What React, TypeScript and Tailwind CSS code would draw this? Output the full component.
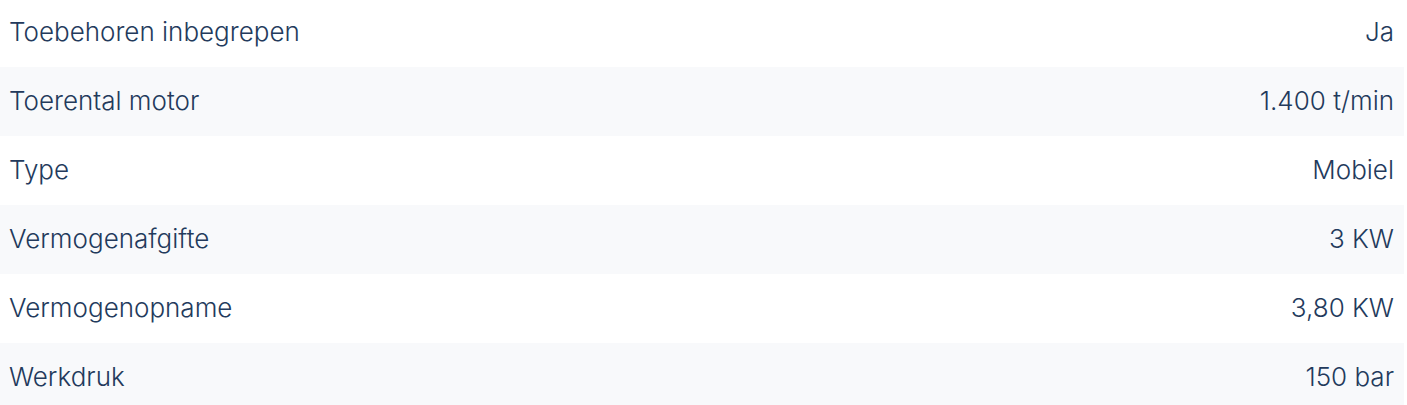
const specs = [
  { label: "Toebehoren inbegrepen", value: "Ja" },
  { label: "Toerental motor", value: "1.400 t/min" },
  { label: "Type", value: "Mobiel" },
  { label: "Vermogenafgifte", value: "3 KW" },
  { label: "Vermogenopname", value: "3,80 KW" },
  { label: "Werkdruk", value: "150 bar" },
];

export default function App() {
  return (
    <div className="h-[405px] w-full overflow-hidden bg-white font-['Inter',sans-serif] text-[26px] font-[350] text-[#233a5c]">
      <div className="-mt-[2px] w-[1404px]">
        {specs.map((s, i) => (
          <div
            key={s.label}
            className={`flex h-[69px] items-center justify-between pb-[2px] pl-[9px] pr-[10px] ${i % 2 === 1 ? "bg-[#f8f9fb]" : "bg-white"}`}
          >
            <span>{s.label}</span>
            <span>{s.value}</span>
          </div>
        ))}
      </div>
    </div>
  );
}
